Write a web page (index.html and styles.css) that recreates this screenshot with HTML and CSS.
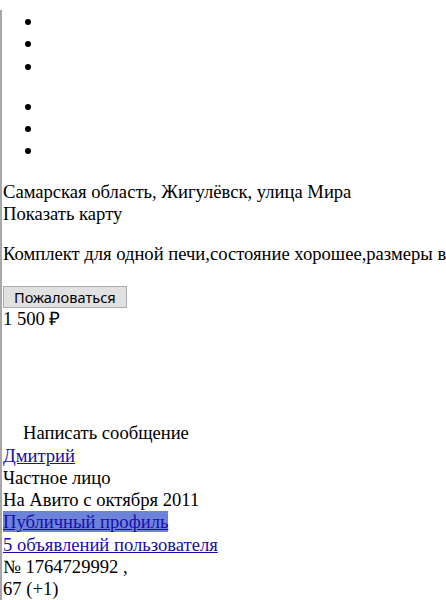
FILE: index.html
```html
<!DOCTYPE html>
<html lang="ru">
<head>
    <meta charset="UTF-8">
    <title>Комплект для одной печи</title>
    <link rel="stylesheet" href="styles.css">
</head>
<body>
    <div class="page">
        <ul class="gallery">
            <li>&nbsp;</li>
            <li>&nbsp;</li>
            <li>&nbsp;</li>
        </ul>
        <ul class="gallery">
            <li>&nbsp;</li>
            <li>&nbsp;</li>
            <li>&nbsp;</li>
        </ul>
        <div class="address">Самарская область, Жигулёвск, улица Мира</div>
        <div class="map-link">Показать карту</div>
        <p class="description">Комплект для одной печи,состояние хорошее,размеры внизу на фото</p>
        <button class="complain">Пожаловаться</button>
        <div class="price">1 500 ₽</div>
        <div class="write">Написать сообщение</div>
        <div><a href="#">Дмитрий</a></div>
        <div>Частное лицо</div>
        <div>На Авито с октября 2011</div>
        <div><a href="#" class="selected">Публичный профиль</a></div>
        <div><a href="#">5 объявлений пользователя</a></div>
        <div>№ 1764729992 ,</div>
        <div>67 (+1)</div>
    </div>
</body>
</html>
```

FILE: styles.css
```css
body {
    margin: 0;
    background: #fff;
    overflow: hidden;
}
.page {
    font-family: "Liberation Serif", "Times New Roman", serif;
    font-size: 18.6px;
    line-height: 22.3px;
    color: #000;
    border-left: 2px solid #a8a8a8;
    padding-left: 1px;
    min-height: 600px;
    white-space: nowrap;
}
.gallery {
    margin: 10px 0 18px;
    padding-left: 40px;
}
.gallery + .gallery {
    margin-top: 0;
}
.address {
    padding-top: 1px;
}
.description {
    margin: 18px 0 20px;
}
.complain {
    font-family: "Noto Sans", "Open Sans", sans-serif;
    font-size: 14.6px;
    line-height: 18px;
    color: #000;
    background: #e1e1e1;
    border: 1px solid #adadad;
    padding: 1px 10px;
    margin: 0;
}
.write {
    margin-top: 92px;
    padding-left: 20px;
}
a {
    color: #1a0dab;
}
.selected {
    background: #6c84d8;
}
```
